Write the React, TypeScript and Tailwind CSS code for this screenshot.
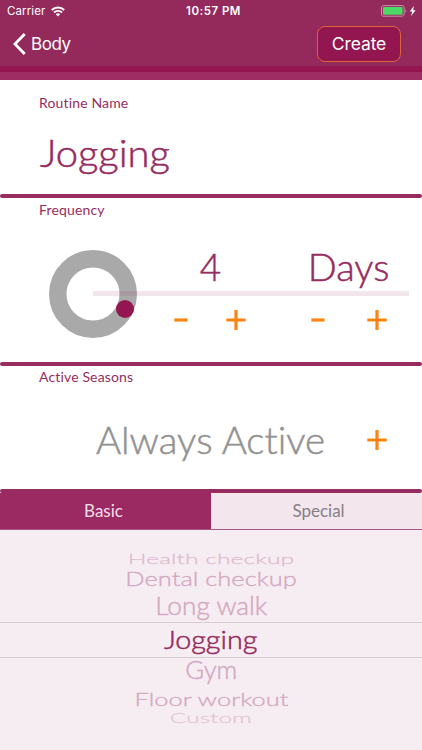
import { useState } from 'react';
import clsx from 'clsx';

type WheelRow = { label: string; row: string; text: string };

const wheelRows: WheelRow[] = [
  { label: 'Health checkup', row: 'h-4', text: 'opacity-25 [transform:translateY(-1px)_scale(0.99,0.52)]' },
  { label: 'Dental checkup', row: 'h-[22px]', text: 'opacity-35 [transform:translateY(-1px)_scale(1.02,0.76)]' },
  { label: 'Long walk', row: 'h-8', text: 'opacity-35 [transform:translateY(-1px)_scale(1.05,0.98)]' },
  {
    label: 'Jogging',
    row: 'h-9 border-y border-[#d6ccd2]',
    text: '[transform:translateY(-1px)_scale(1.15,1)]',
  },
  { label: 'Gym', row: 'h-[27px]', text: 'opacity-35 [transform:translateY(-1.5px)_scale(1.03,0.98)]' },
  { label: 'Floor workout', row: 'h-7', text: 'opacity-35 [transform:translateY(-1px)_scale(1.02,0.74)]' },
  { label: 'Custom', row: 'h-3', text: 'opacity-20 [transform:translateY(-1.5px)_scale(0.98,0.52)]' },
];

function StatusBar() {
  return (
    <div className="grid h-[22px] grid-cols-3 items-center pr-[5px] pl-[7px] text-white">
      <div className="flex items-center gap-1.5">
        <span className="pt-0.5 text-[11.5px] leading-none tracking-[0.1px]">Carrier</span>
        <svg width="14" height="11" viewBox="0 0 14 11" fill="none" stroke="currentColor">
          <path d="M0.8 4a8.9 8.9 0 0 1 12.4 0" strokeWidth="1.9" />
          <path d="M3 6.5a5.7 5.7 0 0 1 8 0" strokeWidth="1.9" />
          <path d="M7 10.4 4.8 8.2a3.2 3.2 0 0 1 4.4 0z" fill="currentColor" stroke="none" />
        </svg>
      </div>
      <span className="pt-0.5 pl-[3px] text-center text-[11.5px] leading-none font-semibold tracking-[0.5px] whitespace-nowrap">
        10:57 PM
      </span>
      <div className="flex items-center justify-end">
        <svg width="36" height="12" viewBox="0 0 36 12">
          <rect x="0.5" y="0.6" width="22.6" height="10.6" rx="2" fill="none" stroke="#c893ae" />
          <rect x="2" y="2.1" width="19.6" height="7.6" rx="0.8" fill="#4cd964" />
          <path d="M24.4 4.2c1.3.5 1.3 3 0 3.5z" fill="#c893ae" />
          <path d="M33 0.8 28.8 6.6h2.5L30 11.2l4.6-6h-2.5z" fill="#fff" />
        </svg>
      </div>
    </div>
  );
}

function Minus() {
  return (
    <svg width="14" height="20" viewBox="0 0 14 20">
      <path d="M0.3 10h13.2" stroke="#fb8413" strokeWidth="3.2" />
    </svg>
  );
}

function Plus() {
  return (
    <svg width="20" height="20" viewBox="0 0 20 20">
      <path d="M0.3 10h19.4M10 0v20" stroke="#fb8413" strokeWidth="3.2" />
    </svg>
  );
}

function Rule() {
  return <div className="h-1 shrink-0 rounded-full bg-[#962c60]" />;
}

export default function App() {
  const [tab, setTab] = useState('Basic');

  return (
    <div className="flex h-[750px] w-[422px] flex-col overflow-hidden bg-white font-['Lato',sans-serif] text-[#962c60] [font-variant-ligatures:none]">
      <header className="h-20 shrink-0 border-b-8 border-[#9e2d63] bg-[#94295c] font-['Inter',sans-serif]">
        <StatusBar />
        <div className="flex h-11 items-center justify-between pr-[21px] pl-[13px] text-white">
          <button className="flex items-center gap-[5px]">
            <svg width="13" height="22" viewBox="0 0 13 22" fill="none">
              <path d="M11.7 1 2 11l9.7 10" stroke="currentColor" strokeWidth="2.8" />
            </svg>
            <span className="text-[17px] leading-none tracking-[-0.4px]">Body</span>
          </button>
          <button className="h-9 w-[84px] rounded-lg border border-[#dc6335] bg-[#931650] text-[17.5px] leading-none tracking-[-0.1px]">
            Create
          </button>
        </div>
        <div className="h-1.5 bg-[#931650]" />
      </header>

      <section className="h-[114px] shrink-0 pt-3.5 pl-[39px]">
        <h2 className="text-sm leading-[17px] tracking-[0.15px]">Routine Name</h2>
        <p className="mt-5 ml-px origin-left scale-x-[1.08] text-[37px] leading-[44px] font-light [-webkit-text-stroke:0.5px]">
          Jogging
        </p>
      </section>
      <Rule />

      <section className="h-[164px] shrink-0 pt-[3px]">
        <h2 className="pl-[39px] text-sm leading-[17px] tracking-[0.15px]">Frequency</h2>
        <div className="flex pt-8 pl-[49px]">
          <div className="relative size-[88px] shrink-0">
            <svg width="88" height="88" viewBox="0 0 88 88">
              <circle cx="44" cy="44" r="35.25" fill="none" stroke="#a9a9a9" strokeWidth="17.5" />
            </svg>
            <div className="absolute top-[41px] left-11 h-[5px] w-[316px] bg-[#962c60]/12" />
            <div className="absolute top-[50px] left-[67px] size-[18px] rounded-full bg-[#931650]" />
          </div>
          <div className="grid shrink-0 grid-cols-[146px_132px] pt-px">
            <div className="flex flex-col items-center">
              <span className="h-[59px] pl-px text-[37px] leading-[32px] font-light [-webkit-text-stroke:0.5px]">
                4
              </span>
              <div className="flex gap-[38px]">
                <Minus />
                <Plus />
              </div>
            </div>
            <div className="flex flex-col items-center">
              <span className="h-[59px] scale-x-[1.03] text-[37px] leading-[32px] font-light [-webkit-text-stroke:0.5px]">
                Days
              </span>
              <div className="flex gap-[42px]">
                <Minus />
                <Plus />
              </div>
            </div>
          </div>
        </div>
      </section>
      <Rule />

      <section className="h-[123px] shrink-0 pt-0.5">
        <h2 className="pl-[39px] text-sm leading-[17px] tracking-[0.15px]">Active Seasons</h2>
        <div className="flex items-center justify-between pt-[33px] pr-[35px] pl-[96px]">
          <span className="origin-left scale-x-[1.04] text-[37px] leading-[44px] font-light text-[#929292] [-webkit-text-stroke:0.5px]">
            Always Active
          </span>
          <Plus />
        </div>
      </section>
      <Rule />

      <div className="grid h-[37px] shrink-0 grid-cols-2 border-b border-[#a45a80]">
        {['Basic', 'Special'].map((name) => (
          <button
            key={name}
            onClick={() => setTab(name)}
            className={clsx(
              'pb-0.5 text-[17px] leading-none first:pr-1 last:pl-1',
              tab === name ? 'bg-[#9c2a62] text-[#f4dfe9]' : 'bg-[#f3e6ed] text-[#858083]',
            )}
          >
            {name}
          </button>
        ))}
      </div>

      <div className="flex flex-1 flex-col bg-[#f6edf3] pt-[22px]">
        {wheelRows.map(({ label, row, text }) => (
          <div key={label} className={clsx('flex shrink-0 items-center justify-center', row)}>
            <span
              className={clsx(
                'text-[25px] leading-none font-light whitespace-nowrap [-webkit-text-stroke:0.5px]',
                text,
              )}
            >
              {label}
            </span>
          </div>
        ))}
      </div>
    </div>
  );
}
